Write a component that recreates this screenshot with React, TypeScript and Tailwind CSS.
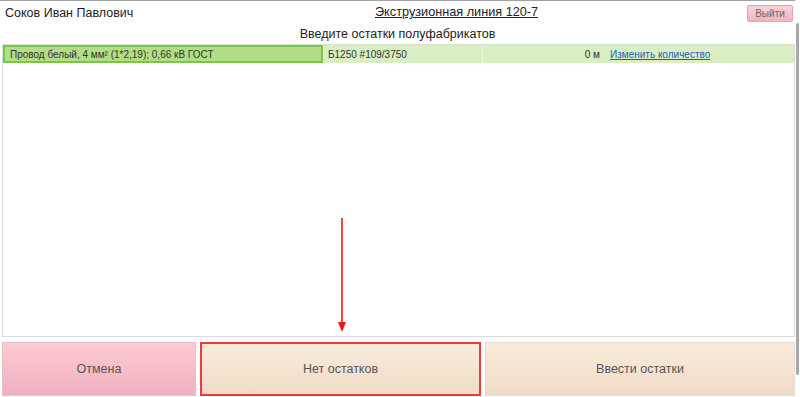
import React from "react";

const font = "font-[family-name:Liberation_Sans,Arial,sans-serif]";

function Header() {
    return (
        <div className="flex items-center h-[25px] border-t border-[#a0a0a0] pl-[5px] pr-[2px] whitespace-nowrap">
            <div className="w-[370px] text-[12.5px] text-[#222]">Соков Иван Павлович</div>
            <div className="text-[12.7px] text-[#222] underline">Экструзионная линия 120-7</div>
            <div className="flex-1 flex justify-end">
                <button className="h-[17px] w-[46px] text-[10px] text-[#666] rounded-[2px] border border-[#e4a6b1] bg-gradient-to-b from-[#fcd3da] to-[#f2b2be]">
                    Выйти
                </button>
            </div>
        </div>
    );
}

function Row() {
    return (
        <div className="flex h-[19px] bg-[#d9efc3] text-[10px] text-[#333] border-t border-[#dcdcdc] whitespace-nowrap">
            <div className="w-[320px] flex items-center pl-[5px] bg-[#b2df86] border-2 border-[#7fc44a]">
                Провод белый, 4 мм² (1*2,19); 0,66 кВ ГОСТ
            </div>
            <div className="w-[160px] flex items-center pl-[5px] border-r border-[#eaf6df]">
                Б1250 #109/3750
            </div>
            <div className="w-[121px] flex items-center justify-end pr-[4px]">0 м</div>
            <div className="flex-1 flex items-center pl-[6px]">
                <span className="text-[#1a5fc2] underline">Изменить количество</span>
            </div>
        </div>
    );
}

function Arrow() {
    return (
        <svg className="absolute left-[334px] top-[174px]" width="10" height="114" viewBox="0 0 10 114">
            <line x1="5" y1="0" x2="5" y2="106" stroke="#f2161b" strokeWidth="1.6" />
            <polygon points="1,104 9,104 5,114" fill="#f2161b" />
        </svg>
    );
}

export default function App() {
    return (
        <div className={`${font} w-[800px] h-[397px] bg-white relative overflow-hidden`}>
            <div className="pr-[5px] h-full flex flex-col">
                <Header />
                <div className="text-center text-[12.5px] text-[#222] h-[19px] leading-[19px]">
                    Введите остатки полуфабрикатов
                </div>
                <div className="relative h-[293px] ml-[2px] border-b border-x border-[#dcdcdc]">
                    <Row />
                    <Arrow />
                </div>
                <div className="flex gap-[4px] ml-[2px] mt-[5px] h-[54px]">
                    <button className="w-[194px] h-full text-[12.5px] text-[#555] bg-gradient-to-b from-[#fecad3] to-[#efb1bd] border border-[#e3c3c9]">
                        Отмена
                    </button>
                    <button className="w-[281px] h-full text-[12.5px] text-[#555] bg-gradient-to-b from-[#faebdc] to-[#efdcc7] border-2 border-[#f03a3e]">
                        Нет остатков
                    </button>
                    <button className="flex-1 h-full text-[12.5px] text-[#555] bg-gradient-to-b from-[#faebdc] to-[#efdcc7] border border-[#e2dcd4]">
                        Ввести остатки
                    </button>
                </div>
            </div>
            <div className="absolute right-[1px] top-[23px] h-[352px] w-[3px] bg-[#a8a8a8] rounded-full" />
        </div>
    );
}
